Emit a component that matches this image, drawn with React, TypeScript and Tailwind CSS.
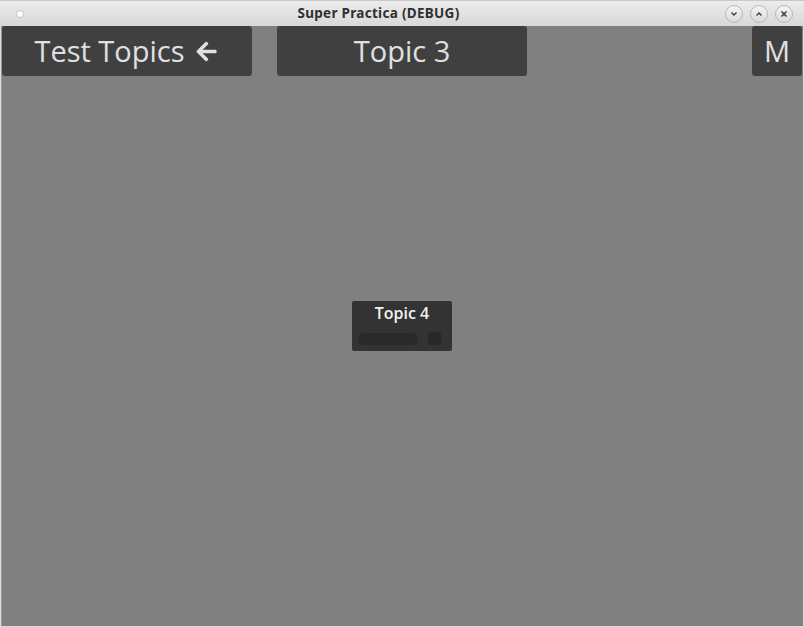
import React from "react";
import { FaArrowLeft } from "react-icons/fa";

const TitleButton: React.FC<{ children: React.ReactNode }> = ({ children }) => (
  <div className="w-[18px] h-[18px] rounded-full border border-[#b8b8b8] bg-gradient-to-b from-[#f4f4f4] to-[#dadada] flex items-center justify-center text-[#3a3a3a]">
    {children}
  </div>
);

const TopButton: React.FC<{ className?: string; children: React.ReactNode }> = ({
  className = "",
  children,
}) => (
  <div
    className={`h-[50px] bg-[#404040] rounded-[3px] flex items-center justify-center text-[#e0e0e0] text-[29px] ${className}`}
  >
    {children}
  </div>
);

export default function App() {
  return (
    <div
      className="w-[804px] h-[627px] flex flex-col bg-[#dcdcdc] overflow-hidden"
      style={{ fontFamily: '"Open Sans", "Noto Sans", sans-serif' }}
    >
      {/* window title bar */}
      <div className="h-[26px] shrink-0 relative flex items-center bg-gradient-to-b from-[#ececec] to-[#d8d8d8] border-t border-[#c8c8c8]">
        <div className="ml-[16px] w-[8px] h-[8px] rounded-full bg-white border border-[#c4c4c4]" />
        <div
          className="flex-1 text-center text-[13.5px] font-bold text-[#303030] tracking-[0.3px] pl-[8px]"
          style={{ fontFamily: '"Noto Sans", sans-serif' }}
        >
          Super Practica (DEBUG)
        </div>
        <div className="flex gap-[7px] mr-[11px]">
          <TitleButton>
            <svg width="10" height="10" viewBox="0 0 10 10" fill="none" stroke="currentColor" strokeWidth="1.4">
              <path d="M2.5 3.5 L5 6 L7.5 3.5" />
            </svg>
          </TitleButton>
          <TitleButton>
            <svg width="10" height="10" viewBox="0 0 10 10" fill="none" stroke="currentColor" strokeWidth="1.4">
              <path d="M2.5 6.5 L5 4 L7.5 6.5" />
            </svg>
          </TitleButton>
          <TitleButton>
            <svg width="10" height="10" viewBox="0 0 10 10" fill="none" stroke="currentColor" strokeWidth="1.5">
              <path d="M2.5 2.5 L7.5 7.5 M7.5 2.5 L2.5 7.5" />
            </svg>
          </TitleButton>
        </div>
      </div>

      {/* app content */}
      <div className="flex-1 flex flex-col bg-[#808080] mx-[1px] mb-[1px] border-l border-[#9a9a9a]">
        <div className="flex pr-[1px]">
          <TopButton className="w-[250px]">
            <span className="flex items-center gap-[10px] -ml-[2px]">
              Test Topics
              <FaArrowLeft className="w-[23px] h-[23px] mt-[1px]" />
            </span>
          </TopButton>
          <TopButton className="w-[250px] ml-[25px]">Topic 3</TopButton>
          <div className="flex-1" />
          <TopButton className="w-[50px]">M</TopButton>
        </div>

        <div className="flex-1 flex items-start justify-center pt-[225px] pr-[1px]">
          <div className="w-[100px] h-[50px] bg-[#333333] rounded-[2px] flex flex-col items-center pt-[1px]">
            <div className="text-[16px] font-semibold text-[#f2f2f2] leading-[22px]">Topic 4</div>
            <div className="flex items-center w-full px-[6px] mt-[8px] gap-[10px]">
              <div className="w-[60px] h-[12px] rounded-full bg-[#2a2a2a]" />
              <div className="w-[13px] h-[13px] rounded-[2px] bg-[#282828]" />
            </div>
          </div>
        </div>
      </div>
    </div>
  );
}
